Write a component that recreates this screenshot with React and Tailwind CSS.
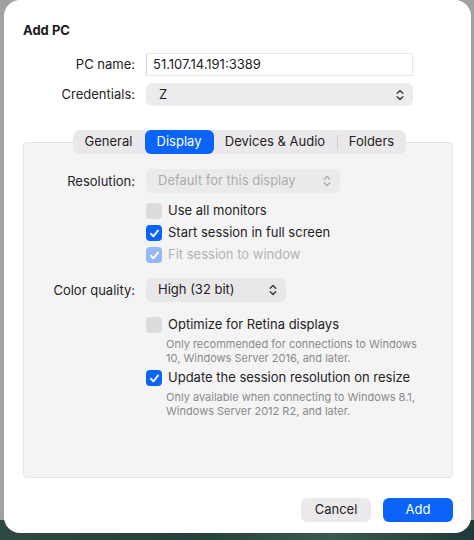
import React from "react";

const font = { fontFamily: 'Inter, "Noto Sans", sans-serif' };

function Chevrons({ color = "#3a3a3a" }) {
  return (
    <svg width="8" height="12" viewBox="0 0 8 12" fill="none" stroke={color} strokeWidth="1.4" strokeLinecap="round" strokeLinejoin="round">
      <path d="M1.2 4.3 L4 1.5 L6.8 4.3" />
      <path d="M1.2 7.7 L4 10.5 L6.8 7.7" />
    </svg>
  );
}

function Check({ state }) {
  if (state === "off") {
    return <div className="w-4 h-4 rounded-[4px] bg-[#dddbdd] shrink-0" />;
  }
  const bg = state === "on" ? "bg-[#0a64fa]" : "bg-[#93b8f8]";
  return (
    <div className={`w-4 h-4 rounded-[4px] ${bg} shrink-0 flex items-center justify-center`}>
      <svg width="11" height="11" viewBox="0 0 11 11" fill="none" stroke="white" strokeWidth="1.9" strokeLinecap="round" strokeLinejoin="round">
        <path d="M2 5.8 L4.4 8.3 L9 2.6" />
      </svg>
    </div>
  );
}

function CheckRow({ state, label, dim }) {
  return (
    <div className="flex items-center gap-[6px] h-[22px]">
      <Check state={state} />
      <span className={dim ? "text-[#b3b3b3]" : "text-[#232323]"}>{label}</span>
    </div>
  );
}

export default function App() {
  return (
    <div className="w-[474px] h-[540px] bg-[#a1a1a1] relative overflow-hidden text-[13px] text-[#232323]" style={font}>
      <div className="absolute left-0 right-0 bottom-0 h-[20px] bg-[linear-gradient(90deg,#2d4a44,#23403c_40%,#3a5a4c_70%,#1f3a38)]" />
      <div className="relative ml-[4px] w-[467px] h-[533px] bg-white rounded-[16px] pl-[19px] pr-[18px] pt-[22px] flex flex-col">
        <div className="font-bold leading-4 text-[#1a1a1a]">Add PC</div>

        <div className="mt-[15px] grid grid-cols-[112px_267px] gap-x-[11px] gap-y-[7px] items-center">
          <div className="text-right">PC name:</div>
          <div className="h-[23px] border border-[#e8e8e8] border-l-[#d6d6d6] flex items-center pl-[6px]">51.107.14.191:3389</div>
          <div className="text-right">Credentials:</div>
          <div className="h-[23px] rounded-[6px] bg-[#eeebee] flex items-center justify-between pl-[13px] pr-[9px]">
            <span>Z</span>
            <Chevrons />
          </div>
        </div>

        <div className="mt-[24px] relative">
          <div className="flex justify-center relative z-10 pl-[2px]">
            <div className="h-6 rounded-[7px] bg-[#ebe8eb] flex items-center">
              <div className="px-3 w-[72px] text-center">General</div>
              <div className="w-[69px] h-6 rounded-[6px] bg-[#0a64fa] text-white flex items-center justify-center">Display</div>
              <div className="w-[123px] text-center">Devices &amp; Audio</div>
              <div className="w-px h-[14px] bg-[#cfcccf]" />
              <div className="w-[68px] text-center">Folders</div>
            </div>
          </div>
          <div className="-mt-3 h-[336px] bg-[#f5f4f5] border border-[#e6e4e6] rounded-[4px] pt-[26px]">
            <div className="grid grid-cols-[111px_1fr] gap-x-[11px] items-start">
              <div className="text-right leading-6">Resolution:</div>
              <div>
                <div className="w-[194px] h-6 rounded-[6px] bg-[#ecebec] flex items-center justify-between pl-[12px] pr-[9px] text-[#acacac]">
                  <span>Default for this display</span>
                  <Chevrons color="#b0b0b0" />
                </div>
                <div className="mt-[7px]">
                  <CheckRow state="off" label="Use all monitors" />
                  <CheckRow state="on" label="Start session in full screen" />
                  <CheckRow state="dim" label="Fit session to window" dim />
                </div>
              </div>

              <div className="text-right leading-6 mt-[12px]">Color quality:</div>
              <div className="mt-[12px]">
                <div className="w-[140px] h-6 rounded-[6px] bg-[#e9e7e9] flex items-center justify-between pl-[12px] pr-[9px]">
                  <span>High (32 bit)</span>
                  <Chevrons />
                </div>
                <div className="mt-[12px]">
                  <CheckRow state="off" label="Optimize for Retina displays" />
                  <div className="pl-[20px] text-[11px] leading-[14px] text-[#8a8a8a] mt-[1px]">
                    Only recommended for connections to Windows<br />10, Windows Server 2016, and later.
                  </div>
                  <div className="mt-[2px]">
                    <CheckRow state="on" label="Update the session resolution on resize" />
                  </div>
                  <div className="pl-[20px] text-[11px] leading-[14px] text-[#8a8a8a] mt-[1px]">
                    Only available when connecting to Windows 8.1,<br />Windows Server 2012 R2, and later.
                  </div>
                </div>
              </div>
            </div>
          </div>
        </div>

        <div className="mt-[20px] flex justify-end gap-3">
          <div className="w-[70px] h-6 rounded-[6px] bg-[#ece9ec] flex items-center justify-center">Cancel</div>
          <div className="w-[70px] h-6 rounded-[6px] bg-[#0a64fa] text-white flex items-center justify-center">Add</div>
        </div>
      </div>
    </div>
  );
}
